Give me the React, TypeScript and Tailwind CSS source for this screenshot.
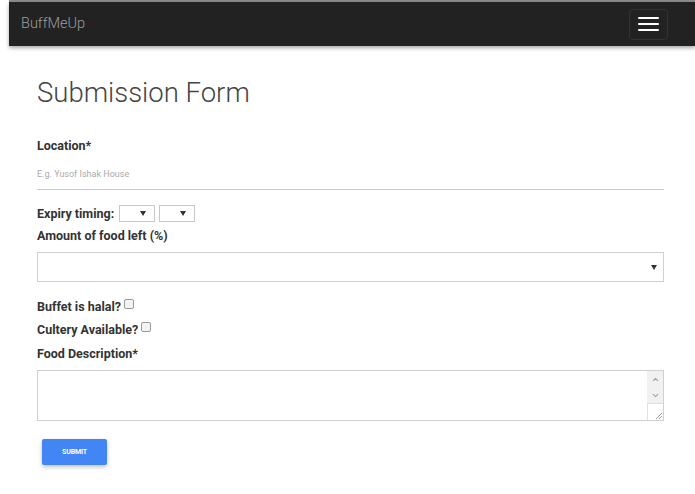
import { ChevronDown, ChevronUp } from "lucide-react";

function Caret() {
  return (
    <svg width="6" height="5" viewBox="0 0 6 5" aria-hidden="true">
      <path d="M0 0h6L3 5z" fill="#333" />
    </svg>
  );
}

function TinySelect() {
  return (
    <span className="flex h-[17px] w-[36px] items-center justify-end border border-[#c8c8c8] bg-white pr-[8px]">
      <Caret />
    </span>
  );
}

function Checkbox() {
  return <span className="ml-[3px] inline-block h-[10px] w-[10px] rounded-[2px] border border-[#9a9a9a] bg-[#f3f3f3]" />;
}

export default function App() {
  return (
    <div className="min-h-[494px] w-[695px] bg-white font-['Roboto',sans-serif] text-[#333]">
      <div className="pl-[9px]">
        <div className="h-[2px] bg-[#8c8c8c]" />
        <nav className="flex h-[44px] items-center justify-between bg-[#222] pl-[12px] pr-[27px] shadow-[0_2px_4px_rgba(0,0,0,0.35)]">
          <span className="text-[14.5px] font-light text-[#9d9d9d]">BuffMeUp</span>
          <button
            type="button"
            className="flex h-[31px] w-[39px] flex-col items-center justify-center gap-[4px] rounded-[4px] border border-[#333]"
          >
            <span className="h-[2px] w-[21px] rounded bg-white" />
            <span className="h-[2px] w-[21px] rounded bg-white" />
            <span className="h-[2px] w-[21px] rounded bg-white" />
          </button>
        </nav>
      </div>

      <main className="px-[37px] pr-[31px]">
        <h1 className="mt-[30px] text-[27.5px] font-light leading-[33px] text-[#444]">Submission Form</h1>

        <label className="mt-[29px] block text-[12.5px] font-bold leading-[16px]">Location*</label>
        <div className="mt-[15px] border-b border-[#c9c9c9] pb-[9px] text-[9px] leading-[11px] text-[#aaa]">
          E.g. Yusof Ishak House
        </div>

        <div className="mt-[15px] flex items-center gap-[4px]">
          <span className="mr-[1px] text-[12.5px] font-bold leading-[17px]">Expiry timing:</span>
          <TinySelect />
          <TinySelect />
        </div>
        <label className="mt-[6px] block text-[12.5px] font-bold leading-[16px]">Amount of food left (%)</label>

        <div className="mt-[8px] flex h-[30px] items-center justify-end border border-[#d0d0d0] pr-[6px]">
          <Caret />
        </div>

        <div className="mt-[17px] flex items-center text-[12.5px] font-bold leading-[16px]">
          Buffet is halal?
          <span className="-mt-[4px]">
            <Checkbox />
          </span>
        </div>
        <div className="mt-[7px] flex items-center text-[12.5px] font-bold leading-[16px]">
          Cultery Available?
          <span className="-mt-[4px]">
            <Checkbox />
          </span>
        </div>
        <label className="mt-[8px] block text-[12.5px] font-bold leading-[16px]">Food Description*</label>

        <div className="mt-[8px] flex h-[51px] border border-[#d0d0d0]">
          <div className="flex-1" />
          <div className="flex w-[16px] flex-col bg-[#f1f1f1]">
            <div className="flex h-[16px] items-center justify-center text-[#a3a3a3]">
              <ChevronUp size={9} strokeWidth={3} />
            </div>
            <div className="flex h-[16px] items-center justify-center text-[#a3a3a3]">
              <ChevronDown size={9} strokeWidth={3} />
            </div>
            <div className="flex flex-1 items-end justify-end border-l border-t border-[#e0e0e0] bg-white">
              <svg width="9" height="9" viewBox="0 0 9 9" aria-hidden="true">
                <path d="M8 2L2 8M8 5L5 8" stroke="#999" strokeWidth="1" />
              </svg>
            </div>
          </div>
        </div>

        <button
          type="button"
          className="mt-[18px] ml-[5px] flex h-[26px] w-[65px] items-center justify-center rounded-[2px] bg-[#4285f4] text-[7px] font-bold tracking-tight text-white shadow-[0_2px_4px_rgba(0,0,0,0.25)]"
        >
          SUBMIT
        </button>
      </main>
    </div>
  );
}
